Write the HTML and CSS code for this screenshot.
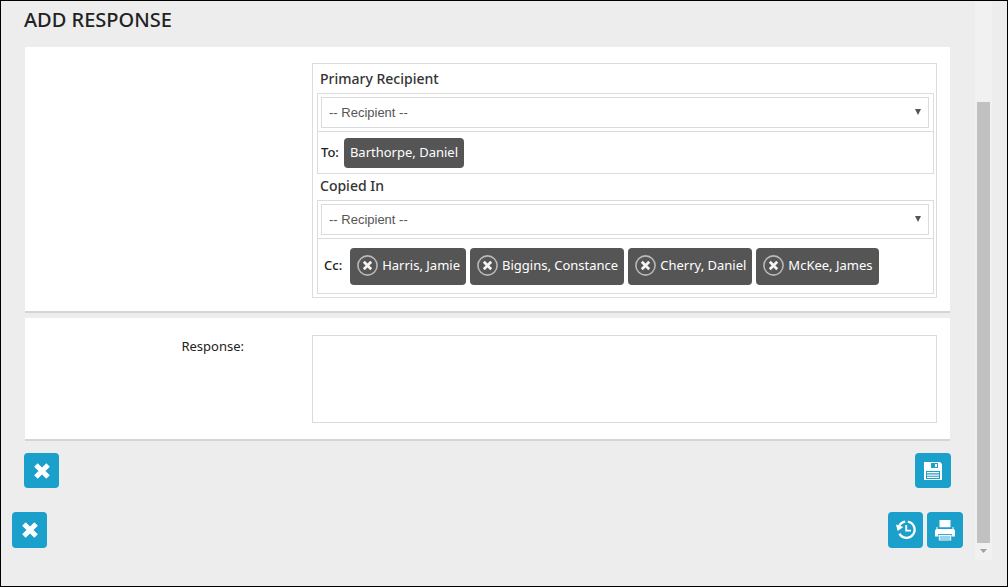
FILE: index.html
```html
<!DOCTYPE html>
<html lang="en">
<head>
<meta charset="utf-8">
<title>Add Response</title>
<link rel="stylesheet" href="styles.css">
</head>
<body>
<svg class="sprite" aria-hidden="true">
  <symbol id="cross" viewBox="0 0 16 16"><path d="M2.6 2.6l10.8 10.8M13.4 2.6L2.6 13.4" fill="none" stroke="currentColor" stroke-width="4.4"/></symbol>
  <symbol id="remove" viewBox="0 0 21 21">
    <circle cx="10.5" cy="10.5" r="9.6" fill="none" stroke="#b8b8b8" stroke-width="1.6"/>
    <path d="M6.8 6.8l7.4 7.4M14.2 6.8l-7.4 7.4" fill="none" stroke="#f4f4f4" stroke-width="2.7"/>
  </symbol>
</svg>
<div class="window">
  <main class="page">
    <form class="form">
      <h1 class="title">ADD RESPONSE</h1>
      <section class="panel recipients-panel">
        <div class="recipients">
          <label class="heading" for="primary">Primary Recipient</label>
          <div class="group">
            <div class="picker"><select id="primary" class="select"><option>-- Recipient --</option></select></div>
            <div class="chosen chosen-to">
              <span class="to-label">To:</span>
              <span class="chip">Barthorpe, Daniel</span>
            </div>
          </div>
          <label class="heading" for="copied">Copied In</label>
          <div class="group">
            <div class="picker"><select id="copied" class="select"><option>-- Recipient --</option></select></div>
            <div class="chosen chosen-cc">
              <span class="cc-label">Cc:</span>
              <button type="button" class="chip chip-removable"><svg class="remove"><use href="#remove"/></svg>Harris, Jamie</button>
              <button type="button" class="chip chip-removable"><svg class="remove"><use href="#remove"/></svg>Biggins, Constance</button>
              <button type="button" class="chip chip-removable"><svg class="remove"><use href="#remove"/></svg>Cherry, Daniel</button>
              <button type="button" class="chip chip-removable"><svg class="remove"><use href="#remove"/></svg>McKee, James</button>
            </div>
          </div>
        </div>
      </section>
      <section class="panel response-panel">
        <label class="field-label" for="response">Response:</label>
        <textarea id="response" class="response"></textarea>
      </section>
      <div class="actions">
        <button type="button" class="button" aria-label="Cancel"><svg class="icon-cross"><use href="#cross"/></svg></button>
        <button type="button" class="button button-wide" aria-label="Save">
          <svg class="icon-save" viewBox="0 0 18 18">
            <path d="M0 0h16l2 2v16H0z" fill="#fff"/>
            <path d="M7 1h7v5H7zM2 9h14v8H2z" fill="#1b9fcb"/>
            <path d="M11 2h2v3h-2zM3 10h12v1.3H3zM3 12.4h12v1.3H3zM3 14.8h12v1.3H3z" fill="#fff"/>
          </svg>
        </button>
      </div>
    </form>
    <div class="actions page-actions">
      <button type="button" class="button" aria-label="Close"><svg class="icon-cross"><use href="#cross"/></svg></button>
      <div class="tools">
        <button type="button" class="button" aria-label="History">
          <svg class="icon-tool" viewBox="0 0 20 20">
            <path d="M3 6.2A8.1 8.1 0 0 1 9.2 1.6M11.8 1.7A8.1 8.1 0 1 1 3.4 13.6" fill="none" stroke="#fff" stroke-width="2.3"/>
            <path d="M0 4.6L1.6 11l5.8-4z" fill="#fff"/>
            <path d="M10.2 5v5.6H15" fill="none" stroke="#fff" stroke-width="1.9"/>
          </svg>
        </button>
        <button type="button" class="button button-wide" aria-label="Print">
          <svg class="icon-tool" viewBox="0 0 20 20">
            <path d="M4.5 0h11v7.2h-11zM0 10.5l1.5-2V7h1v2h15V7h1v1.5l1.5 2v6h-3.5V14h-13v2.5H0z" fill="#fff"/>
            <path d="M3.8 14.4h12.4V20.5H3.8z" fill="#fff"/>
            <path d="M3.2 14.6h13.6M4.6 17h10.8M4.6 19h10.8" stroke="#1b9fcb" stroke-width=".9"/>
          </svg>
        </button>
      </div>
    </div>
  </main>
  <div class="scrollbar" aria-hidden="true">
    <div class="thumb"></div>
    <svg class="arrow" viewBox="0 0 7 4"><path d="M0 0h7L3.5 4z" fill="#a0a0a0"/></svg>
  </div>
</div>
</body>
</html>
```

FILE: styles.css
```css
* {
  box-sizing: border-box;
}

body {
  margin: 0;
  font: 13px/18px "Noto Sans", "Open Sans", sans-serif;
  color: #222;
}

.sprite {
  position: absolute;
  width: 0;
  height: 0;
}

.window {
  display: flex;
  min-height: 100vh;
  padding: 0 15px 26px 11px;
  border: 1px solid #000;
  background: #ededed;
}

.page {
  flex: 1;
  min-width: 0;
}

.form {
  margin: 0 24px 0 12px;
}

.title {
  margin: 0;
  padding: 6px 0 14px;
  font-size: 20px;
  line-height: 26px;
  font-weight: 500;
}

.panel {
  margin: 0 1px 5px;
  border-bottom: 2px solid #d2d6d9;
  background: #fff;
}

.recipients-panel {
  padding: 16px 13px 13px 287px;
}

.recipients {
  padding: 0 2px 3px 4px;
  border: 1px solid #dcdcdc;
}

.heading {
  display: block;
  padding: 0 3px 2px;
  font-size: 14px;
  line-height: 24px;
  font-weight: 500;
  color: #333;
}

.heading:first-child {
  padding: 3px 3px 2px;
}

.group {
  border: 1px solid #dcdcdc;
}

.picker {
  padding: 3px 4px 3px 3px;
  border-bottom: 1px solid #dcdcdc;
}

.select {
  display: block;
  width: 100%;
  height: 31px;
  padding: 0 9px 0 7px;
  border: 1px solid #d8dce0;
  border-radius: 0;
  appearance: none;
  background: #fff url("data:image/svg+xml,%3Csvg xmlns='http://www.w3.org/2000/svg' width='6' height='6'%3E%3Cpath d='M0 0h6L3 6z' fill='%23555'/%3E%3C/svg%3E") no-repeat right 7px top 11px;
  font: 13px "Liberation Sans", Arial, sans-serif;
  color: #555;
}

.chosen {
  display: flex;
  flex-wrap: wrap;
  align-items: center;
  gap: 4px;
}

.chosen-to {
  padding: 6px 3px 5px;
}

.chosen-cc {
  padding: 9px 6px 8px;
}

.to-label,
.cc-label {
  font-weight: 500;
}

.to-label {
  margin-right: 1px;
  padding-bottom: 2px;
}

.cc-label {
  margin-right: 4px;
  padding-bottom: 3px;
}

.chip {
  padding: 5px 6px 7px;
  border: 0;
  border-radius: 4px;
  background: #555;
  font: inherit;
  color: #fff;
}

.chip-removable {
  display: flex;
  align-items: center;
  gap: 4px;
  height: 37px;
  padding: 0 6px 3px 7px;
}

.remove {
  width: 21px;
  height: 21px;
}

.response-panel {
  display: flex;
  margin-bottom: 12px;
  padding: 17px 13px 16px 0;
}

.field-label {
  width: 219px;
  margin-right: 68px;
  padding-top: 2px;
  text-align: right;
}

.response {
  flex: 1;
  height: 88px;
  border: 1px solid #d8dce0;
  background: #fff;
  resize: none;
}

.actions {
  display: flex;
  justify-content: space-between;
}

.page-actions {
  margin: 24px 12px 0 0;
}

.tools {
  display: flex;
  gap: 4px;
}

.button {
  display: grid;
  place-items: center;
  width: 35px;
  height: 35px;
  padding: 0;
  border: 0;
  border-radius: 4px;
  background: #1b9fcb;
  color: #fff;
}

.button-wide {
  width: 36px;
}

.page-actions .button {
  height: 36px;
}

.icon-cross {
  width: 18px;
  height: 18px;
}

.icon-save {
  width: 18px;
  height: 18px;
}

.icon-tool {
  width: 20px;
  height: 20px;
  overflow: visible;
}

.scrollbar {
  display: flex;
  flex-direction: column;
  align-items: center;
  width: 17px;
  padding: 101px 0 7px;
  background: #f1f1f1;
}

.thumb {
  flex: 1;
  width: 13px;
  background: #c1c1c1;
}

.arrow {
  width: 7px;
  height: 4px;
  margin-top: 6px;
}
```
